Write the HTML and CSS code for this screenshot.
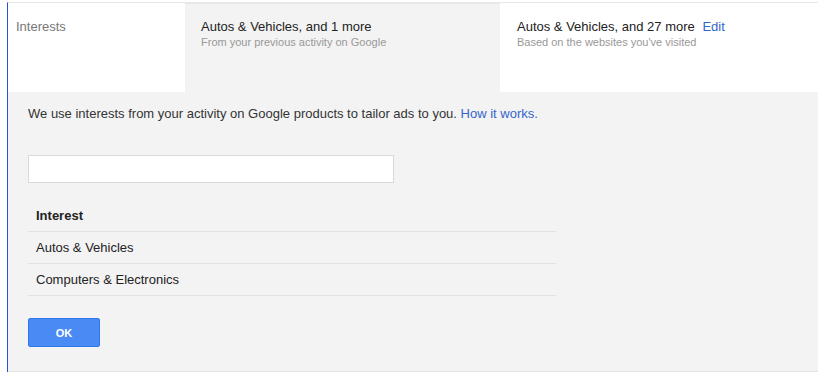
FILE: index.html
```html
<!DOCTYPE html>
<html>
<head>
<meta charset="utf-8">
<link rel="stylesheet" href="styles.css">
</head>
<body>
<div class="frame">
  <div class="tabs">
    <div class="tab tab-label">Interests</div>
    <div class="tab tab-active">
      <div class="tab-title">Autos &amp; Vehicles, and 1 more</div>
      <div class="tab-sub">From your previous activity on Google</div>
    </div>
    <div class="tab tab-third">
      <div class="tab-title">Autos &amp; Vehicles, and 27 more <a class="link edit">Edit</a></div>
      <div class="tab-sub">Based on the websites you've visited</div>
    </div>
  </div>
  <div class="panel">
    <p class="desc">We use interests from your activity on Google products to tailor ads to you. <a class="link">How it works.</a></p>
    <input class="search" type="text">
    <div class="table">
      <div class="row head">Interest</div>
      <div class="row">Autos &amp; Vehicles</div>
      <div class="row">Computers &amp; Electronics</div>
    </div>
    <button class="ok">OK</button>
  </div>
</div>
</body>
</html>
```
FILE: styles.css
```css
html, body {
  margin: 0;
  padding: 0;
  background: #fff;
  font-family: "Liberation Sans", Arial, sans-serif;
  font-size: 13px;
  color: #222;
}
.frame {
  margin: 2px 0 0 7px;
  width: 810px;
  border-left: 1px solid #1f55d0;
  border-top: 1px solid #e8e8e8;
}
.tabs {
  display: flex;
  height: 89px;
}
.tab {
  box-sizing: border-box;
  padding-top: 16px;
  line-height: 16px;
}
.tab-label {
  width: 177px;
  padding-left: 8px;
  color: #777;
  background: #fff;
}
.tab-active {
  width: 315px;
  padding-left: 16px;
  background: #f3f3f3;
  box-shadow: inset 0 1px 1px #e6e6e6;
}
.tab-third {
  width: 317px;
  padding-left: 17px;
  background: #fff;
}
.tab-title {
  color: #222;
}
.tab-sub {
  font-size: 11px;
  line-height: 14px;
  color: #999;
}
.link {
  color: #3366cc;
  text-decoration: none;
}
.edit {
  margin-left: 4px;
}
.panel {
  background: #f3f3f3;
  border-bottom: 1px solid #e5e5e5;
  padding: 14px 20px 24px 20px;
}
.desc {
  margin: 0;
  line-height: 16px;
  color: #333;
}
.search {
  display: block;
  box-sizing: border-box;
  margin: 33px 0 0 0;
  width: 366px;
  height: 28px;
  border: 1px solid #d9d9d9;
  background: #fff;
  padding: 0 8px;
}
.table {
  margin-top: 17px;
  width: 528px;
}
.row {
  box-sizing: border-box;
  height: 32px;
  line-height: 32px;
  padding-left: 8px;
  border-bottom: 1px solid #e3e3e3;
  color: #222;
}
.row.head {
  font-weight: bold;
}
.ok {
  display: block;
  margin-top: 22px;
  width: 72px;
  height: 29px;
  box-sizing: border-box;
  border: 1px solid #3079ed;
  border-radius: 2px;
  background: #4a8af4;
  color: #fff;
  font-family: "Liberation Sans", Arial, sans-serif;
  font-size: 11px;
  font-weight: bold;
  padding: 0;
}
```
